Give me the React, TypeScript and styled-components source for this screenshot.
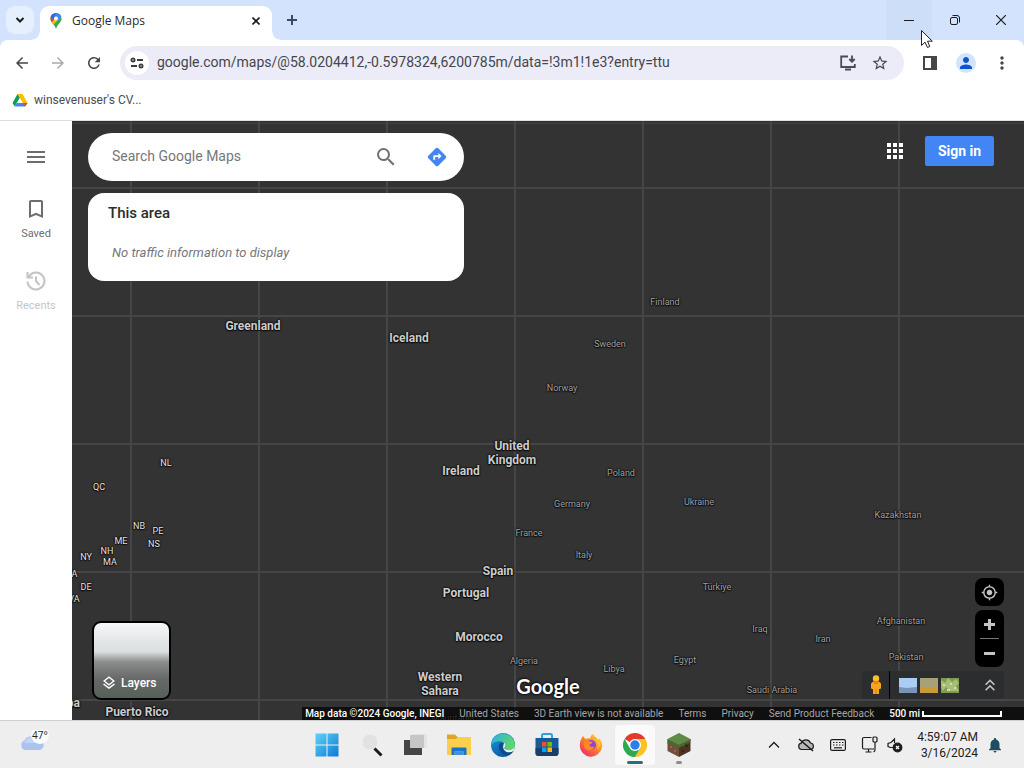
import React from 'react';
import styled, { createGlobalStyle } from 'styled-components';
import {
  MdMenu, MdBookmarkBorder, MdSearch, MdDirections, MdApps, MdMyLocation, MdOutlineLayers,
  MdKeyboardDoubleArrowUp, MdStarBorder, MdMoreVert, MdPerson, MdNotifications, MdArrowBack,
  MdArrowForward, MdRefresh,
} from 'react-icons/md';

const GlobalStyle = createGlobalStyle`
  *, *::before, *::after { box-sizing: border-box; }
  body { margin: 0; font-family: "Open Sans", "Noto Sans", sans-serif; }
  button { border: 0; padding: 0; background: none; font: inherit; color: inherit; }
  svg { display: block; flex: none; }
`;

const Screen = styled.div`
  display: flex;
  flex-direction: column;
  min-height: 100vh;
  position: relative;
  background: #fff;
`;

/* ---------- Browser chrome ---------- */

const TabStrip = styled.header`
  display: flex;
  align-items: flex-end;
  height: 40px;
  padding-left: 6px;
  background: #d3e3fd;
`;

const TabSearch = styled.button`
  display: grid;
  place-items: center;
  width: 28px;
  height: 28px;
  margin: 0 6px 6px 0;
  border-radius: 9px;
  background: #e6effd;
`;

const Tab = styled.div`
  position: relative;
  display: flex;
  align-items: center;
  gap: 8px;
  width: 232px;
  height: 34px;
  padding: 0 8px 4px;
  border-radius: 9px 9px 0 0;
  background: #fff;
  font-size: 12px;
  color: #2a2b2e;

  &::before, &::after {
    content: "";
    position: absolute;
    bottom: 0;
    width: 8px;
    height: 8px;
  }
  &::before { left: -8px; background: radial-gradient(circle at 0 0, transparent 7px, #fff 8px); }
  &::after { right: -8px; background: radial-gradient(circle at 100% 0, transparent 7px, #fff 8px); }
`;

const TabTitle = styled.span`
  flex: 1;
  line-height: 16px;
`;

const TabButton = styled.button`
  display: grid;
  place-items: center;
  width: 16px;
  height: 16px;
`;

const NewTab = styled.button`
  display: grid;
  place-items: center;
  width: 28px;
  height: 28px;
  margin: 0 0 6px 6px;
`;

const WindowControls = styled.div`
  display: flex;
  align-self: stretch;
  margin-left: auto;
`;

const WindowButton = styled.button<{ $hover?: boolean }>`
  display: grid;
  place-items: center;
  width: 46px;
  background: ${p => (p.$hover ? '#cddef8' : 'transparent')};
`;

const ToolbarBack = styled.div`
  background: #d3e3fd;
`;

const Toolbar = styled.div`
  display: flex;
  align-items: center;
  height: 46px;
  padding: 0 4px;
  border-radius: 8px 8px 0 0;
  background: #fff;
`;

const ToolButton = styled.button<{ $width?: number }>`
  display: grid;
  place-items: center;
  width: ${p => p.$width ?? 36}px;
  height: 32px;
  color: #444648;
`;

const Omnibox = styled.form`
  display: flex;
  flex: 1;
  align-items: center;
  height: 34px;
  margin: 0 8px;
  padding: 0 8px 0 5px;
  border-radius: 17px;
  background: #ebecf7;
`;

const SiteInfo = styled.button`
  display: grid;
  place-items: center;
  width: 24px;
  height: 24px;
  margin-right: 8px;
  border-radius: 50%;
  background: #fff;
`;

const Address = styled.input`
  flex: 1;
  min-width: 0;
  height: 24px;
  padding: 0 0 2px;
  border: 0;
  outline: 0;
  background: transparent;
  font: 14px Roboto, "Open Sans", sans-serif;
  color: #44464c;
`;

const Avatar = styled.span`
  display: grid;
  place-items: center;
  width: 20px;
  height: 20px;
  border-radius: 50%;
  background: #d3e3fd;
  color: #0b57d0;
`;

const Bookmarks = styled.nav`
  display: flex;
  align-items: flex-start;
  height: 35px;
  padding: 6px 12px;
  border-bottom: 1px solid #dcdfe1;
`;

const Bookmark = styled.a`
  display: flex;
  align-items: center;
  gap: 6px;
  height: 16px;
  font-family: Roboto, "Open Sans", sans-serif;
  font-size: 12px;
  line-height: 16px;
  color: #4a4c50;
  text-decoration: none;
`;

/* ---------- Maps page ---------- */

const Page = styled.main`
  display: flex;
  flex: 1;
  font-family: Roboto, "Liberation Sans", sans-serif;
`;

const Rail = styled.nav`
  display: flex;
  flex-direction: column;
  align-items: center;
  width: 72px;
  padding-top: 24px;
  background: #fff;
  color: #6b6e71;
`;

const RailButton = styled.button<{ $faded?: boolean }>`
  display: flex;
  flex-direction: column;
  align-items: center;
  gap: 5px;
  width: 72px;
  height: 45px;
  margin-top: ${p => (p.$faded ? 27 : 28)}px;
  font-size: 11px;
  line-height: 16px;
  opacity: ${p => (p.$faded ? 0.4 : 1)};
`;

const MapCanvas = styled.section`
  position: relative;
  flex: 1;
  overflow: hidden;
  background-color: #333;
  background-image:
    linear-gradient(#424242, #424242),
    linear-gradient(to right, #464646 2px, transparent 2px),
    linear-gradient(to bottom, #464646 2px, transparent 2px);
  background-size: 100% 1px, 128px 128px, 128px 128px;
  background-position: 0 2px, 58px 0, 0 66px;
  background-repeat: no-repeat, repeat, repeat;
`;

type Kind = 'country' | 'region' | 'faint';

const labelStyle: Record<Kind, string> = {
  country: 'font-size: 12px; font-weight: 700; color: #cdcdcd;',
  region: 'font-size: 9px; color: #e4e4e4;',
  faint: 'font-size: 9px; color: #a2a2a2;',
};

const MapLabel = styled.span<{ $x: number; $y: number; $kind: Kind }>`
  position: absolute;
  left: ${p => p.$x}px;
  top: ${p => p.$y}px;
  width: 100px;
  margin: -6px 0 0 -50px;
  line-height: 14px;
  text-align: center;
  white-space: pre-line;
  text-shadow: 0 0 2px #000, 0 0 2px #000, 0 1px 1px #111;
  ${p => labelStyle[p.$kind]}
`;

const SearchPanel = styled.div`
  position: absolute;
  top: 12px;
  left: 16px;
  display: flex;
  flex-direction: column;
  gap: 12px;
  width: 376px;
`;

const SearchBox = styled.form`
  display: flex;
  align-items: center;
  height: 48px;
  padding: 0 15px 0 24px;
  border-radius: 24px;
  background: #fff;
`;

const SearchInput = styled.input`
  flex: 1;
  min-width: 0;
  height: 24px;
  padding: 0 0 2px;
  border: 0;
  outline: 0;
  font: 14px Roboto, sans-serif;
  &::placeholder { color: #75777a; opacity: 1; }
`;

const SearchButton = styled.button<{ $blue?: boolean }>`
  display: grid;
  place-items: center;
  width: 24px;
  height: 24px;
  margin-left: ${p => (p.$blue ? 27 : 0)}px;
  color: ${p => (p.$blue ? '#4285f4' : '#6f7275')};
`;

const AreaCard = styled.section`
  height: 88px;
  padding: 10px 20px;
  border-radius: 16px;
  background: #fff;
`;

const AreaTitle = styled.h2`
  margin: 0;
  font-size: 15px;
  font-weight: 500;
  line-height: 20px;
  color: #2b2c2f;
`;

const AreaNote = styled.p`
  margin: 20px 0 0 4px;
  font-size: 13px;
  font-style: italic;
  line-height: 20px;
  color: #75777a;
`;

const Account = styled.div`
  position: absolute;
  top: 15px;
  right: 30px;
  display: flex;
  align-items: center;
  gap: 18px;
  color: #fff;
`;

const SignIn = styled.a`
  width: 69px;
  height: 30px;
  border-radius: 2px;
  background: #4285f4;
  font-size: 14px;
  font-weight: 700;
  line-height: 30px;
  text-align: center;
  text-decoration: none;
  color: #fff;
`;

const LayersButton = styled.button`
  position: absolute;
  left: 20px;
  bottom: 20px;
  display: flex;
  align-items: flex-end;
  gap: 4px;
  width: 79px;
  height: 79px;
  padding: 0 0 7px 7px;
  border: 2px solid #000;
  border-radius: 9px;
  background: linear-gradient(#f6f7f7 0%, #e6e9ea 20%, #dcdfe0 38%, #8b8d8d 52%, #666868 75%, #566058 100%);
  font-size: 12px;
  font-weight: 500;
  line-height: 16px;
  color: #fff;
`;

const MapTools = styled.div`
  position: absolute;
  right: 20px;
  bottom: 21px;
  display: flex;
  flex-direction: column;
  align-items: flex-end;
`;

const ToolGroup = styled.div`
  display: flex;
  flex-direction: column;
  align-items: center;
  width: 29px;
  margin-bottom: 4px;
  border-radius: 8px;
  background: #000;
  color: #c4c4c4;
`;

const MapTool = styled.button`
  display: grid;
  place-items: center;
  width: 29px;
  height: 28px;
`;

const ToolRule = styled.hr`
  width: 19px;
  height: 1px;
  margin: 0;
  border: 0;
  background: #777;
`;

const ImageryBar = styled.div`
  display: flex;
  align-items: center;
  width: 142px;
  height: 28px;
  border-radius: 3px;
  background: #2c2d2f;
`;

const Pegman = styled.button`
  display: grid;
  place-items: center;
  width: 28px;
  height: 28px;
  margin-right: 9px;
  border-right: 1px solid #000;
`;

const Thumbs = styled.div`
  display: flex;
  flex: 1;
  gap: 3px;
`;

const Attribution = styled.footer`
  position: absolute;
  right: 0;
  bottom: 0;
  display: flex;
  align-items: center;
  gap: 15px;
  height: 13px;
  padding: 0 22px 0 3px;
  background: rgba(0, 0, 0, 0.7);
  font-size: 10px;
  line-height: 13px;
  white-space: nowrap;
  color: #a5a5a5;

  a { color: inherit; text-decoration: none; }
`;

const Credit = styled.strong`
  font-weight: 500;
  color: #fff;
`;

const Scale = styled.span`
  display: flex;
  align-items: center;
  gap: 2px;
  font-weight: 500;
  color: #fff;

  &::after {
    content: "";
    width: 80px;
    height: 6px;
    border: solid #fff;
    border-width: 0 2px 2px;
  }
`;

const Wordmark = styled.span`
  position: absolute;
  left: calc(50% - 40px);
  bottom: 21px;
  width: 80px;
  font: 700 20px/26px Lato, sans-serif;
  text-align: center;
  color: #fff;
  text-shadow: 0 0 2px #000, 0 0 3px #000;
`;

/* ---------- Taskbar ---------- */

const Taskbar = styled.footer`
  display: grid;
  grid-template-columns: 1fr auto 1fr;
  align-items: center;
  height: 48px;
  border-top: 1px solid #cfcfcf;
  background: #eeeeee;
`;

const Weather = styled.div`
  display: flex;
  align-items: center;
  padding-left: 18px;
`;

const Apps = styled.div`
  display: flex;
  gap: 4px;
  padding-right: 18px;
`;

const AppButton = styled.button<{ $active?: boolean; $mark?: string }>`
  position: relative;
  display: grid;
  place-items: center;
  width: 40px;
  height: 40px;
  border-radius: 4px;
  background: ${p => (p.$active ? '#fafafa' : 'transparent')};

  &::after {
    content: "";
    position: absolute;
    bottom: 1px;
    left: ${p => (p.$active ? 12 : 17)}px;
    width: ${p => (p.$active ? 16 : 6)}px;
    height: 3px;
    border-radius: 2px;
    background: ${p => p.$mark ?? 'transparent'};
  }
`;

const Tray = styled.div`
  display: flex;
  align-items: center;
  justify-content: flex-end;
  padding-right: 20px;
  color: #1c1c1c;
`;

const TrayButton = styled.button<{ $narrow?: boolean }>`
  display: grid;
  place-items: center;
  width: ${p => (p.$narrow ? 18 : 32)}px;
  height: 32px;
`;

const Clock = styled.time`
  width: 74px;
  margin-right: 8px;
  font-family: Roboto, "Open Sans", sans-serif;
  font-size: 12px;
  line-height: 16px;
  text-align: right;
  white-space: nowrap;
`;

const Cursor = styled.svg`
  position: absolute;
  top: 29px;
  left: 920px;
`;

/* ---------- Drawings ---------- */

const MapsPin = () => (
  <svg width="16" height="16" viewBox="0 0 16 16">
    <clipPath id="pin"><path d="M8 0a5.500 5.500 0 0 0-5.500 5.500C2.500 9.500 6.500 11 8 16c1.500-5 5.500-6.500 5.500-10.500A5.500 5.500 0 0 0 8 0z" /></clipPath>
    <g clipPath="url(#pin)">
      <path fill="#34a853" d="M0 0h16v16H0z" />
      <path fill="#fbbc04" d="M2 8l4-3 5 1-7 7z" />
      <path fill="#ea4335" d="M0 9V0h4l4 5-5 5z" />
      <path fill="#1a73e8" d="M4 0h5L5 6 2 4z" />
      <path fill="#4285f4" d="M8 0h6v3L9 8 7 4z" />
    </g>
    <circle cx="8" cy="5.500" r="2" fill="#fff" />
  </svg>
);

const DriveIcon = () => (
  <svg width="16" height="16" viewBox="0 0 16 16">
    <path fill="#0f9d58" d="M5.500 2L.5 11l2.300 3.500L8 5.500z" />
    <path fill="#fbbc04" d="M5.500 2h5l5 9h-5z" />
    <path fill="#4285f4" d="M2.800 14.500L5 11h10.500L13 14.500z" />
    <path fill="#ea4335" d="M11 11h4.500L13 14.500z" />
    <path fill="#fff" d="M8 6.200l2.800 4.800H5.200z" />
  </svg>
);

const TuneIcon = () => (
  <svg width="14" height="12" viewBox="0 0 14 12" fill="none" stroke="#3a3c40" strokeWidth="1.800">
    <circle cx="3" cy="3" r="1.600" /><path d="M7 3h6M1 9h6" /><circle cx="11" cy="9" r="1.600" />
  </svg>
);

const InstallIcon = () => (
  <svg width="18" height="18" viewBox="0 0 18 18" fill="none" stroke="#4a4c52" strokeWidth="1.800">
    <path d="M9 2.500H2.200v10.500h13.600V10M6 15.500h6M13 1.500v6M10.300 5l2.700 2.700L15.700 5" />
  </svg>
);

const SidePanelIcon = () => (
  <svg width="16" height="16" viewBox="0 0 16 16">
    <path fill="none" stroke="#444648" strokeWidth="2" d="M2 2h12v12H2z" />
    <path fill="#444648" d="M9 2h5v12H9z" />
  </svg>
);

const HistoryIcon = () => (
  <svg width="24" height="24" viewBox="0 0 24 24" fill="none" stroke="#6b6e71" strokeWidth="2">
    <path d="M3.500 12.500A8.500 8.500 0 1 0 5.500 6.500L4 8M3.500 3v5.500H9M12 7.500V12l3.500 4" />
  </svg>
);

const PegmanIcon = () => (
  <svg width="12" height="20" viewBox="0 0 12 20">
    <path fill="#f9a51b" d="M3 6.500h6l2 2v5l-2 .8V19H3v-4.700l-2-.8v-5z" />
    <path fill="#e0781c" d="M5.500 14h1v5h-1zM3 7.500h6l-3 2z" />
    <circle cx="6" cy="3.500" r="3.200" fill="#fdbf2d" />
    <path fill="#e0781c" d="M3.500 5.300c1.500 1.500 3.500 1.500 5 0L8 7H4z" />
  </svg>
);

const Thumb = ({ sky, ground, leafy }: { sky: string; ground: string; leafy?: boolean }) => (
  <svg width="18" height="15" viewBox="0 0 18 15">
    <path fill={sky} d="M0 0h18v15H0z" />
    <path fill={ground} d={leafy ? 'M0 2l4 3 3-5 4 4 4-3 3 4-3 3 3 5H9L5 9 2 13 0 9z' : 'M0 9l8 1 10-1v6H0z'} />
    {leafy && <path fill="#d7dcae" d="M2 6h2v2H2zM9 5h2v2H9zM6 11h3v2H6zM13 9h2v2h-2z" />}
  </svg>
);

const CloudIcon = () => (
  <svg width="34" height="30" viewBox="0 0 34 30">
    <path fill="#a9c4ee" d="M7 20a5 5 0 0 1-.5-9.500A7 7 0 0 1 19 10a5 5 0 0 1 3 10z" />
    <path fill="#c3d6f5" d="M8 10a7 7 0 0 1 11 0l3 3H6z" />
    <circle cx="22" cy="5" r="9" fill="#fafafa" />
    <text x="14" y="9" fontFamily="Open Sans, sans-serif" fontSize="10" fill="#1c1c1c">47°</text>
  </svg>
);

const WindowsIcon = () => (
  <svg width="24" height="24" viewBox="0 0 24 24">
    <defs><linearGradient id="win" x1="0" y1="0" x2="1" y2="1" ><stop stopColor="#5fd2f8" /><stop offset="1" stopColor="#0b7bd4" /></linearGradient></defs>
    <path fill="url(#win)" d="M.5.500h11v11H.5zM12.500.500h11v11h-11zM.5 12.500h11v11H.5zM12.500 12.500h11v11h-11z" />
  </svg>
);

const FindIcon = () => (
  <svg width="24" height="24" viewBox="0 0 24 24">
    <circle cx="11" cy="9" r="7.500" fill="#e2e2e2" />
    <path stroke="#1b1b1b" strokeWidth="3" d="M15.500 15.500l7 7" />
  </svg>
);

const TaskViewIcon = () => (
  <svg width="24" height="24" viewBox="0 0 24 24">
    <path fill="#e4e4e4" d="M9 1h15v14H9z" />
    <path fill="#454545" d="M1 7h18v15H1z" />
    <path fill="#c6c6c6" d="M7 2h14v13H7z" />
  </svg>
);

const FolderIcon = () => (
  <svg width="24" height="24" viewBox="0 0 24 24">
    <path fill="#e0a526" d="M0 1.500h8l3 3H24V12H0z" />
    <path fill="#fbcf4b" d="M0 6h9l2-2h13v18H0z" />
    <path fill="#1a73c8" d="M4.500 22v-6.500q0-1 1-1h13q1 0 1 1V22h-3v-3.500h-9V22z" />
    <path fill="#3f93dc" d="M7.500 18.500h9V22h-9z" />
  </svg>
);

const EdgeIcon = () => (
  <svg width="24" height="24" viewBox="0 0 24 24">
    <defs>
      <linearGradient id="edgeA" x1="0" y1="0" x2="1" y2="0.400"><stop stopColor="#2ab0e8" /><stop offset="1" stopColor="#5fd76a" /></linearGradient>
      <linearGradient id="edgeB" x1="0" y1="0" x2="0.500" y2="1"><stop stopColor="#1b9de2" /><stop offset="1" stopColor="#0c59a4" /></linearGradient>
    </defs>
    <circle cx="12" cy="12" r="12" fill="url(#edgeB)" />
    <path fill="url(#edgeA)" d="M.3 10A12 12 0 0 1 24 12c0 4-3 6-6.500 6-3 0-4.500-1-4-2.500 1.500-2 1-6-3.500-7C6 7.700 2 9 .3 12z" />
    <path fill="#f0f6f8" d="M24 13c-1 3-4 4.500-7 4.200-3-.2-4.300-1.400-3.500-2.500 1-1.500 1-3.500 0-5C12 12 11 17 15 19.500c3 1.300 5.500.5 7.500-1.500z" />
    <path fill="#114a8b" d="M9.500 9.500C6 13 8 20 14 22c4 .5 7-1.500 8.500-4-3 1.800-6.500 2-9-.5-2-2-2.500-5-1-7.500z" />
  </svg>
);

const StoreIcon = () => (
  <svg width="24" height="24" viewBox="0 0 24 24">
    <path fill="none" stroke="#2fa1dd" strokeWidth="2" d="M7 6V2.500Q7 1 8.500 1h7Q17 1 17 2.500V6" />
    <path fill="#175b9c" d="M.5 5h23v15a3 3 0 0 1-3 3h-17a3 3 0 0 1-3-3z" />
    <path fill="#183e6b" d="M.5 15h23v5a3 3 0 0 1-3 3h-17a3 3 0 0 1-3-3z" />
    <path fill="#f25022" d="M7 9h4.500v4.500H7z" /><path fill="#7fba00" d="M12.500 9H17v4.500h-4.500z" />
    <path fill="#00a4ef" d="M7 14.500h4.500V19H7z" /><path fill="#ffb900" d="M12.500 14.500H17V19h-4.500z" />
  </svg>
);

const FirefoxIcon = () => (
  <svg width="24" height="24" viewBox="0 0 24 24">
    <defs><linearGradient id="fox" x1="1" y1="0" x2="0.200" y2="1"><stop stopColor="#ffe14a" /><stop offset="0.450" stopColor="#ff9124" /><stop offset="1" stopColor="#f0246a" /></linearGradient></defs>
    <path fill="url(#fox)" d="M4 3l2.500 3C8 5 9.500 5 11 5.500 11.500 3 13 1.500 14 1c1 3 4 3 5.500 6l1-1.500C23 9 23.500 11 23 14.500A11.200 11.200 0 0 1 .8 13C.7 9 2 5.500 4 3z" />
    <circle cx="12" cy="12" r="5" fill="#8b44d8" />
    <path fill="#ff8a1f" d="M5 9c3-2 5 0 7-.5 1.500 0 2 .8 1 1.700-1 .8-2.500.8-2.500 2 .5 2 3.500 2 5 1-1 4-5.500 5.300-8.500 3C4.500 14 4.500 11 5 9z" />
    <path fill="#ffbd35" d="M15 6c4 2 4.500 7 3 10 2.500-1 4-4 3.500-7-1.500-3-4.500-3-6.500-3z" />
  </svg>
);

const ChromeIcon = () => (
  <svg width="24" height="24" viewBox="0 0 24 24">
    <path fill="#e33b2e" d="M12 12L1.600 6a12 12 0 0 1 20.800 0z" />
    <path fill="#fcc31e" d="M12 12V6h10.400A12 12 0 0 1 12 24l5-9z" />
    <path fill="#2da94f" d="M1.600 6A12 12 0 0 0 12 24l5.200-9-10.400 0z" />
    <circle cx="12" cy="12" r="6" fill="#fff" />
    <circle cx="12" cy="12" r="4.700" fill="#2b7de9" />
  </svg>
);

const GrassBlockIcon = () => (
  <svg width="24" height="24" viewBox="0 0 24 24">
    <path fill="#70503a" d="M.5 6L12 11.500V24L.5 18z" />
    <path fill="#4b3324" d="M23.500 6L12 11.500V24l11.500-6z" />
    <path fill="#5f8b45" d="M12 0l11.500 6L12 12 .5 6z" />
    <path fill="#456b32" d="M.5 6L12 12v3l-2-2-2 1-2-3-2 1-2-2-1.500 1zM23.500 6L12 12v3l3-2 2 0 2-3 2 1 2.500-3z" />
    <path fill="#8c6a4c" d="M3 13h2v2H3zM7 17h2v2H7z" /><path fill="#33221a" d="M15 17h2v2h-2zM19 12h2v2h-2z" />
  </svg>
);

/* Label positions are in map pixels, measured to the middle of the first line. */
const labels: [string, number, number, Kind][] = [
  ['Greenland', 181, 204, 'country'],
  ['Iceland', 337, 216, 'country'],
  ['United\nKingdom', 440, 324, 'country'],
  ['Ireland', 389, 349, 'country'],
  ['Spain', 426, 449, 'country'],
  ['Portugal', 394, 471, 'country'],
  ['Morocco', 407, 515, 'country'],
  ['Western\nSahara', 368, 555, 'country'],
  ['Puerto Rico', 65, 590, 'country'],
  ['NL', 94, 341, 'region'],
  ['QC', 27, 365, 'region'],
  ['NB', 67, 404, 'region'],
  ['PE', 86, 409, 'region'],
  ['ME', 49, 419, 'region'],
  ['NS', 82, 422, 'region'],
  ['NH', 35, 429, 'region'],
  ['NY', 14, 435, 'region'],
  ['MA', 38, 440, 'region'],
  ['PA', 0, 452, 'region'],
  ['DE', 14, 465, 'region'],
  ['VA', 2, 477, 'region'],
  ['Cuba', -6, 581, 'country'],
  ['Finland', 593, 180, 'faint'],
  ['Sweden', 538, 222, 'faint'],
  ['Norway', 490, 266, 'faint'],
  ['Poland', 549, 351, 'faint'],
  ['Germany', 500, 382, 'faint'],
  ['Ukraine', 627, 380, 'faint'],
  ['Kazakhstan', 826, 393, 'faint'],
  ['France', 457, 411, 'faint'],
  ['Italy', 512, 433, 'faint'],
  ['Türkiye', 645, 465, 'faint'],
  ['Afghanistan', 829, 499, 'faint'],
  ['Iraq', 688, 507, 'faint'],
  ['Iran', 751, 517, 'faint'],
  ['Pakistan', 834, 535, 'faint'],
  ['Algeria', 452, 539, 'faint'],
  ['Libya', 542, 547, 'faint'],
  ['Egypt', 613, 538, 'faint'],
  ['Saudi Arabia', 700, 568, 'faint'],
  ['Mauritania', 381, 596, 'faint'],
];

const stroke = { fill: 'none', stroke: '#1c1c1c' };

export default function App() {
  return (
    <Screen>
      <GlobalStyle />
      <TabStrip>
        <TabSearch aria-label="Search tabs">
          <svg width="10" height="8" viewBox="0 0 10 8" {...stroke} strokeWidth="2"><path d="M1.500 2L5 5.500 8.500 2" /></svg>
        </TabSearch>
        <Tab>
          <MapsPin />
          <TabTitle>Google Maps</TabTitle>
          <TabButton aria-label="Close tab">
            <svg width="8" height="8" viewBox="0 0 8 8" {...stroke} strokeWidth="1.600"><path d="M.5.500l7 7M7.500.500l-7 7" /></svg>
          </TabButton>
        </Tab>
        <NewTab aria-label="New tab">
          <svg width="12" height="12" viewBox="0 0 12 12" fill="none" stroke="#3f4a5c" strokeWidth="2"><path d="M6 1v10M1 6h10" /></svg>
        </NewTab>
        <WindowControls>
          <WindowButton $hover aria-label="Minimize">
            <svg width="10" height="10" viewBox="0 0 10 10" {...stroke}><path d="M0 5.500h10" /></svg>
          </WindowButton>
          <WindowButton aria-label="Restore">
            <svg width="10" height="10" viewBox="0 0 10 10" {...stroke}>
              <rect x="0.500" y="2.500" width="7" height="7" rx="1.500" /><path d="M2.500.500H7A2.500 2.500 0 0 1 9.500 3v4.500" />
            </svg>
          </WindowButton>
          <WindowButton aria-label="Close">
            <svg width="10" height="10" viewBox="0 0 10 10" {...stroke} strokeWidth="1.200"><path d="M0 0l10 10M10 0L0 10" /></svg>
          </WindowButton>
        </WindowControls>
      </TabStrip>

      <ToolbarBack>
        <Toolbar>
          <ToolButton aria-label="Back"><MdArrowBack size={18} /></ToolButton>
          <ToolButton aria-label="Forward"><MdArrowForward size={18} color="#a9abad" /></ToolButton>
          <ToolButton aria-label="Reload"><MdRefresh size={18} /></ToolButton>
          <Omnibox>
            <SiteInfo type="button" aria-label="Site information"><TuneIcon /></SiteInfo>
            <Address aria-label="Address" defaultValue="google.com/maps/@58.0204412,-0.5978324,6200785m/data=!3m1!1e3?entry=ttu" />
            <ToolButton type="button" $width={32} aria-label="Install Google Maps"><InstallIcon /></ToolButton>
            <ToolButton type="button" $width={32} aria-label="Bookmark this tab"><MdStarBorder size={18} /></ToolButton>
          </Omnibox>
          <ToolButton aria-label="Side panel"><SidePanelIcon /></ToolButton>
          <ToolButton aria-label="Profile"><Avatar><MdPerson size={18} /></Avatar></ToolButton>
          <ToolButton aria-label="Menu"><MdMoreVert size={20} /></ToolButton>
        </Toolbar>
      </ToolbarBack>

      <Bookmarks aria-label="Bookmarks">
        <Bookmark href="#drive"><DriveIcon />winsevenuser's CV...</Bookmark>
      </Bookmarks>

      <Page>
        <Rail>
          <button aria-label="Menu"><MdMenu size={24} /></button>
          <RailButton><MdBookmarkBorder size={24} />Saved</RailButton>
          <RailButton $faded><HistoryIcon />Recents</RailButton>
        </Rail>

        <MapCanvas aria-label="Map">
          {labels.map(([text, x, y, kind]) => (
            <MapLabel key={text} $x={x} $y={y} $kind={kind}>{text}</MapLabel>
          ))}

          <SearchPanel>
            <SearchBox>
              <SearchInput aria-label="Search Google Maps" placeholder="Search Google Maps" />
              <SearchButton type="button" aria-label="Search"><MdSearch size={24} /></SearchButton>
              <SearchButton type="button" $blue aria-label="Directions"><MdDirections size={22} /></SearchButton>
            </SearchBox>
            <AreaCard>
              <AreaTitle>This area</AreaTitle>
              <AreaNote>No traffic information to display</AreaNote>
            </AreaCard>
          </SearchPanel>

          <Account>
            <button aria-label="Google apps"><MdApps size={24} /></button>
            <SignIn href="#signin">Sign in</SignIn>
          </Account>

          <LayersButton><MdOutlineLayers size={16} />Layers</LayersButton>
          <Wordmark>Google</Wordmark>

          <MapTools>
            <ToolGroup>
              <MapTool aria-label="Your location"><MdMyLocation size={17} /></MapTool>
            </ToolGroup>
            <ToolGroup>
              <MapTool aria-label="Zoom in">
                <svg width="11" height="11" viewBox="0 0 11 11" stroke="#c4c4c4" strokeWidth="3"><path d="M0 5.500h11M5.500 0v11" /></svg>
              </MapTool>
              <ToolRule />
              <MapTool aria-label="Zoom out">
                <svg width="11" height="11" viewBox="0 0 11 11" stroke="#c4c4c4" strokeWidth="3"><path d="M0 5.500h11" /></svg>
              </MapTool>
            </ToolGroup>
            <ImageryBar>
              <Pegman aria-label="Street View"><PegmanIcon /></Pegman>
              <Thumbs>
                <Thumb sky="#a9cdf3" ground="#7895b8" />
                <Thumb sky="#a9a078" ground="#c99a35" />
                <Thumb sky="#7c9c50" ground="#a8bd78" leafy />
              </Thumbs>
              <MapTool aria-label="Show imagery"><MdKeyboardDoubleArrowUp size={20} color="#c4c4c4" /></MapTool>
            </ImageryBar>
          </MapTools>

          <Attribution>
            <Credit>Map data ©2024 Google, INEGI</Credit>
            <span>United States</span>
            <span>3D Earth view is not available</span>
            <a href="#terms">Terms</a>
            <a href="#privacy">Privacy</a>
            <a href="#feedback">Send Product Feedback</a>
            <Scale>500 mi</Scale>
          </Attribution>
        </MapCanvas>
      </Page>

      <Taskbar>
        <Weather><CloudIcon /></Weather>
        <Apps>
          <AppButton aria-label="Start"><WindowsIcon /></AppButton>
          <AppButton aria-label="Search"><FindIcon /></AppButton>
          <AppButton aria-label="Task view"><TaskViewIcon /></AppButton>
          <AppButton aria-label="File Explorer"><FolderIcon /></AppButton>
          <AppButton aria-label="Edge"><EdgeIcon /></AppButton>
          <AppButton aria-label="Store"><StoreIcon /></AppButton>
          <AppButton aria-label="Firefox"><FirefoxIcon /></AppButton>
          <AppButton $active $mark="#277078" aria-label="Chrome"><ChromeIcon /></AppButton>
          <AppButton $mark="#8d8d8d" aria-label="Minecraft"><GrassBlockIcon /></AppButton>
        </Apps>
        <Tray>
          <TrayButton aria-label="Hidden icons">
            <svg width="12" height="8" viewBox="0 0 12 8" {...stroke} strokeWidth="1.300"><path d="M1 6.500l5-5 5 5" /></svg>
          </TrayButton>
          <TrayButton aria-label="OneDrive">
            <svg width="18" height="14" viewBox="0 0 18 14" {...stroke} strokeWidth="1.200">
              <path fill="#b9b9b9" d="M4.500 11.500a3.200 3.200 0 0 1-.3-6.300A5 5 0 0 1 13.500 5a3.300 3.300 0 0 1 .3 6.500z" /><path strokeWidth="1.600" d="M2 1l14 12" />
            </svg>
          </TrayButton>
          <TrayButton aria-label="Keyboard">
            <svg width="16" height="12" viewBox="0 0 16 12" {...stroke} strokeWidth="1.200">
              <rect x="0.600" y="0.600" width="14.800" height="10.800" rx="1.500" />
              <path strokeDasharray="1.500 1.500" d="M3 3.500h10.500M3 6h10.500" /><path d="M4 8.800h8" />
            </svg>
          </TrayButton>
          <TrayButton aria-label="Network">
            <svg width="18" height="17" viewBox="0 0 18 17" {...stroke} strokeWidth="1.200">
              <path d="M10.500 1.500H3A1.500 1.500 0 0 0 1.500 3v8.500A1.500 1.500 0 0 0 3 13h10M7.500 13v3M4.500 16h6M14 6v7.500q0 2-1.500 2.500" /><rect x="12" y="1" width="4" height="5" rx="1" />
            </svg>
          </TrayButton>
          <TrayButton $narrow aria-label="Volume">
            <svg width="16" height="16" viewBox="0 0 16 16" {...stroke} strokeWidth="1.200">
              <path d="M6 10.500H3.500L1 9.500v-3L4 5.500l3.500-3.500v4" /><circle cx="10.500" cy="10.500" r="4.300" fill="#1c1c1c" /><path stroke="#fff" d="M9 9l3 3M12 9l-3 3" />
            </svg>
          </TrayButton>
          <Clock dateTime="2024-03-16T04:59:07">4:59:07 AM<br />3/16/2024</Clock>
          <MdNotifications size={18} color="#1d4f60" />
        </Tray>
      </Taskbar>

      <Cursor width="14" height="22" viewBox="0 0 14 22">
        <path fill="#fff" stroke="#222" strokeLinejoin="round" d="M1.500 1.500v15l3.500-3.300 2.500 5.300 2.300-1-2.300-5.300h4.800z" />
      </Cursor>
    </Screen>
  );
}
